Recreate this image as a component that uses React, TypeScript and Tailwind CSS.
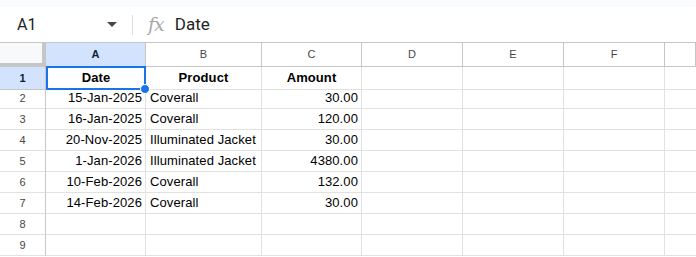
import React from 'react';

const cols = ['A', 'B', 'C', 'D', 'E', 'F', ''];

const rows: [string, string, string][] = [
  ['15-Jan-2025', 'Coverall', '30.00'],
  ['16-Jan-2025', 'Coverall', '120.00'],
  ['20-Nov-2025', 'Illuminated Jacket', '30.00'],
  ['1-Jan-2026', 'Illuminated Jacket', '4380.00'],
  ['10-Feb-2026', 'Coverall', '132.00'],
  ['14-Feb-2026', 'Coverall', '30.00'],
  ['', '', ''],
  ['', '', ''],
];

const grid = 'grid grid-cols-[46px_100px_116px_100px_101px_101px_101px_1fr]';

export default function App() {
  return (
    <div className="w-[696px] h-[257px] overflow-hidden bg-white font-['Roboto',sans-serif]">
      {/* top strip */}
      <div className="h-[7px] bg-[#f9fbfd]" />

      {/* formula bar */}
      <div className="flex items-center h-[36px] border-b border-[#c4c7c5]">
        <div className="w-[132px] flex items-center pl-[17px] pr-[15px]">
          <span className="text-[16px] text-[#1f1f1f] flex-1">A1</span>
          <svg width="10" height="5" viewBox="0 0 10 5">
            <path d="M0 0h10L5 5z" fill="#444746" />
          </svg>
        </div>
        <div className="w-px h-[20px] bg-[#dadce0]" />
        <span className="ml-[15px] text-[19px] italic text-[#a8a8a8] font-['DejaVu_Serif',serif] tracking-[-1px]">fx</span>
        <span className="ml-[11px] text-[17px] text-[#1f1f1f]">Date</span>
      </div>

      {/* column headers */}
      <div className={`${grid} h-[24px]`}>
        <div className="bg-[#f8f9fa] border-r-4 border-b-4 border-[#c4c7c5]" />
        {cols.map((c, i) => (
          <div
            key={i}
            className={`flex items-center justify-center text-[11px] border-r border-b border-[#c4c7c5] font-['Liberation_Sans',sans-serif] ${
              c === 'A' ? 'bg-[#d3e3fd] text-[#0b1f3a] font-bold' : 'text-[#444746]'
            }`}
          >
            {c}
          </div>
        ))}
      </div>

      {/* row 1 */}
      <div className={`${grid} h-[21px] font-['Liberation_Sans',sans-serif] text-[13px] tracking-[0.1px] text-black`}>
        <div className="flex items-center justify-center bg-[#d3e3fd] border-r border-b border-[#c4c7c5] text-[11px] font-bold text-[#0b1f3a]">
          1
        </div>
        <div className="relative flex items-center justify-center font-bold border-2 border-[#1a73e8] -mt-px">
          Date
          <div className="absolute -right-[6px] -bottom-[6px] w-[10px] h-[10px] rounded-full bg-[#1a73e8] border border-white" />
        </div>
        <div className="flex items-center justify-center font-bold border-r border-b border-[#e1e1e1]">Product</div>
        <div className="flex items-center justify-center font-bold border-r border-b border-[#e1e1e1]">Amount</div>
        <div className="border-r border-b border-[#e1e1e1]" />
        <div className="border-r border-b border-[#e1e1e1]" />
        <div className="border-r border-b border-[#e1e1e1]" />
        <div className="border-b border-[#e1e1e1]" />
      </div>

      {rows.map((r, i) => (
        <div key={i} className={`${grid} h-[21px] font-['Liberation_Sans',sans-serif] text-[13px] tracking-[0.1px] text-black`}>
          <div className="flex items-center justify-center border-r border-b border-[#c4c7c5] border-b-[#e1e1e1] text-[11px] text-[#444746]">
            {i + 2}
          </div>
          <div className="flex items-center justify-end pr-[3px] border-r border-b border-[#e1e1e1] whitespace-nowrap">{r[0]}</div>
          <div className="flex items-center pl-[4px] border-r border-b border-[#e1e1e1] whitespace-nowrap">{r[1]}</div>
          <div className="flex items-center justify-end pr-[3px] border-r border-b border-[#e1e1e1]">{r[2]}</div>
          <div className="border-r border-b border-[#e1e1e1]" />
          <div className="border-r border-b border-[#e1e1e1]" />
          <div className="border-r border-b border-[#e1e1e1]" />
          <div className="border-b border-[#e1e1e1]" />
        </div>
      ))}
    </div>
  );
}
